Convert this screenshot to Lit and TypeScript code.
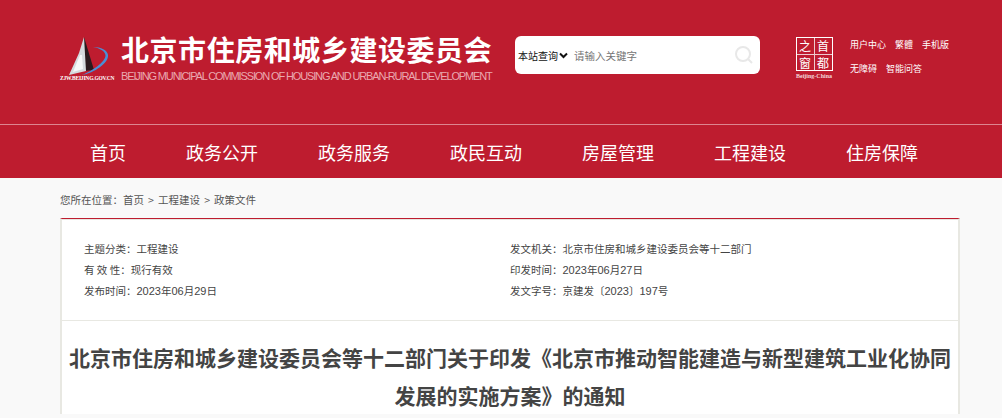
import { LitElement, html, css } from "lit";
import { customElement } from "lit/decorators.js";

const NAV = ["首页", "政务公开", "政务服务", "政民互动", "房屋管理", "工程建设", "住房保障"];

@customElement("app-root")
export class AppRoot extends LitElement {
  static styles = css`
    :host { display: block; width: 1002px; height: 418px; overflow: hidden; background: #f9f9f9; font-family: "Noto Sans CJK SC", "Liberation Sans", sans-serif; }
    .top { height: 124px; background: #be1c2f; box-sizing: border-box; padding: 33px 0 0 60px; display: flex; align-items: flex-start; }
    .logo { width: 54px; height: 50px; flex: none; margin-right: 7px; }
    .logo svg { display: block; }
    .logo span { display: block; font: bold 5.5px/6px "Liberation Serif", serif; color: #fff; white-space: nowrap; margin-top: -4px; letter-spacing: -0.2px; }
    .brand { width: 372px; flex: none; margin-right: 22px; }
    .brand h1 { margin: 0; font-size: 28px; line-height: 32px; font-weight: 700; color: #fff; letter-spacing: 0.55px; white-space: nowrap; }
    .brand p { margin: 5px 0 0; font: 11px/13px "Liberation Sans", sans-serif; color: #eaa9b0; white-space: nowrap; letter-spacing: -1.13px; }
    .search { width: 245px; height: 38px; margin-top: 3px; background: #fff; border-radius: 6px; display: flex; align-items: center; padding: 0 6px 0 3px; box-sizing: border-box; flex: none; margin-right: 30px; }
    .scope { font-size: 10px; color: #111; white-space: nowrap; display: flex; align-items: center; gap: 1px; }
    .ph { font-size: 10.5px; color: #757575; margin-left: 6px; flex: 1; white-space: nowrap; }
    .mark { width: 46px; flex: none; margin-right: 13px; margin-left: 1px; display: flex; flex-direction: column; align-items: center; }
    .seal { width: 37px; height: 34px; border: 1.5px solid #fff; box-sizing: border-box; display: grid; grid-template-columns: 1fr 1fr; grid-template-rows: 1fr 1fr; gap: 1px; background: #eec9ce; color: #fff; text-align: center; margin-top: 4px; }
    .seal b { font: 400 12px/15px "Noto Sans CJK SC", serif; background: #be1c2f; overflow: hidden; }
    .mark span { font: bold 6px/8px "Liberation Serif", serif; color: #f3d6da; margin-top: 1px; white-space: nowrap; }
    .links { font-size: 9px; color: #fff; margin-top: 1px; }
    .links div { display: flex; gap: 9px; height: 24px; line-height: 21px; white-space: nowrap; }
    .nav { height: 54px; background: #be1c2f; border-top: 1px solid #dd8590; box-sizing: border-box; display: flex; padding-left: 90px; gap: 60px; align-items: center; }
    .nav a { font-size: 18px; color: #fff; white-space: nowrap; line-height: 52px; }
    .wrap { width: 900px; margin-left: 60px; }
    .crumb { height: 40px; line-height: 44px; font-size: 10.5px; color: #555; white-space: nowrap; word-spacing: 1.75px; }
    .card { border-top: 1px solid #be1c2f; border-left: 2px solid #e8e8e2; border-right: 2px solid #e8e8e2; background: #fff; box-sizing: border-box; }
    .meta { height: 102px; box-sizing: border-box; padding: 18px 22px 0; border-top: 1px solid #e8e8e2; border-bottom: 1px solid #e8e8e2; display: grid; grid-template-columns: 426px 1fr; grid-auto-rows: 21px; font-size: 10.5px; line-height: 21px; color: #444; white-space: nowrap; }
    .n { font: 11px "Liberation Sans", sans-serif; }
    h2 { margin: 0; padding: 17px 0 0; font-size: 21px; line-height: 38px; font-weight: 700; color: #444; text-align: center; white-space: nowrap; }
  `;

  render() {
    return html`
      <div class="top">
        <div class="logo">
          <svg width="54" height="46" viewBox="0 0 54 46">
            <path d="M24 4 L34 37 L24 38 Z" fill="#2a1a1e" />
            <path d="M9 42 L19 20 L24 4 L26 38 Z" fill="#d5dade" />
            <path d="M13 39 L20 22 L22 22 L23 36 Z" fill="#f6f7f8" />
            <path d="M22 42 C34 40 49 30 48 22 C47.500 17 41 14 33 14 C39 15 45.500 18 45.500 22.500 C45.500 29 32 38 22 42 Z" fill="#4a8fd6" />
          </svg>
          <span>ZJW.BEIJING.GOV.CN</span>
        </div>
        <div class="brand">
          <h1>北京市住房和城乡建设委员会</h1>
          <p>BEIJING MUNICIPAL COMMISSION OF HOUSING AND URBAN-RURAL DEVELOPMENT</p>
        </div>
        <div class="search">
          <div class="scope">本站查询
            <svg width="9" height="7" viewBox="0 0 9 7"><path d="M1 1.500 L4.500 5 L8 1.500" fill="none" stroke="#111" stroke-width="2"/></svg>
          </div>
          <div class="ph">请输入关键字</div>
          <svg width="20" height="20" viewBox="0 0 20 20"><circle cx="9" cy="9" r="7" fill="none" stroke="#e8e8e8" stroke-width="2"/><path d="M14 14 L18 18" stroke="#e8e8e8" stroke-width="2"/></svg>
        </div>
        <div class="mark">
          <div class="seal"><b>之</b><b>首</b><b>窗</b><b>都</b></div>
          <span>Beijing-China</span>
        </div>
        <div class="links">
          <div><span>用户中心</span><span>繁體</span><span>手机版</span></div>
          <div><span>无障碍</span><span>智能问答</span></div>
        </div>
      </div>
      <nav class="nav">${NAV.map((n) => html`<a>${n}</a>`)}</nav>
      <div class="wrap">
        <div class="crumb">您所在位置：首页 &gt; 工程建设 &gt; 政策文件</div>
        <div class="card">
          <div class="meta">
            <div>主题分类：工程建设</div><div>发文机关：北京市住房和城乡建设委员会等十二部门</div>
            <div>有 效 性：现行有效</div><div>印发时间：<span class="n">2023</span>年<span class="n">06</span>月<span class="n">27</span>日</div>
            <div>发布时间：<span class="n">2023</span>年<span class="n">06</span>月<span class="n">29</span>日</div><div>发文字号：京建发〔<span class="n">2023</span>〕<span class="n">197</span>号</div>
          </div>
          <h2>北京市住房和城乡建设委员会等十二部门关于印发《北京市推动智能建造与新型建筑工业化协同<br />发展的实施方案》的通知</h2>
        </div>
      </div>
    `;
  }
}
